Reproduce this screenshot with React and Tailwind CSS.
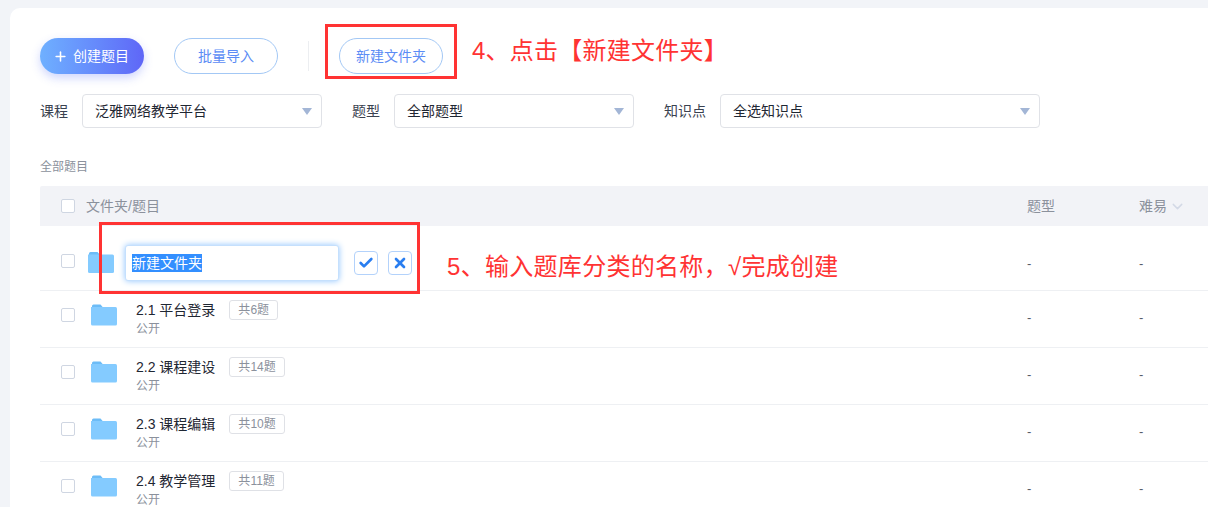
import { Plus, Check, X, ChevronDown } from "lucide-react";

function FolderIcon({ className }) {
  return (
    <svg viewBox="0 0 26 22" className={className}>
      <path d="M1 2.500A1.500 1.500 0 0 1 2.500 1h7l3 3.500H1z" fill="#6cbcf7" />
      <path d="M0 3.500h24.500A1.500 1.500 0 0 1 26 5v15.500a1.500 1.500 0 0 1-1.500 1.500h-23A1.500 1.500 0 0 1 0 20.500z" fill="#84cbff" />
    </svg>
  );
}

function Checkbox({ className = "" }) {
  return <span className={`block w-[14px] h-[14px] rounded-[2px] border border-[#cfd6e2] bg-white shrink-0 ${className}`} />;
}

function SelectBox({ text, width }) {
  return (
    <div className={`${width} h-[34px] rounded-[4px] border border-[#e0e2e7] bg-white flex items-center justify-between pl-[12px] pr-[9px] text-[14px] text-[#1f2733]`}>
      <span className="mt-[1px]">{text}</span>
      <span className="w-0 h-0 border-l-[5.500px] border-r-[5.500px] border-t-[7px] border-l-transparent border-r-transparent border-t-[#a3b6d6]" />
    </div>
  );
}

function OutlineButton({ text }) {
  return (
    <button className="w-[104px] h-[36px] rounded-full border border-[#a3c8f5] bg-white text-[14px] text-[#5b8cf5]">
      {text}
    </button>
  );
}

function Row({ title, count }) {
  return (
    <div className="h-[57px] border-b border-[#eef0f3] flex items-center pl-[21px] pb-[9px]">
      <Checkbox />
      <FolderIcon className="w-[26px] h-[23px] ml-[16px]" />
      <div className="ml-[19px] mt-[8px]">
        <div className="flex items-center h-[20px]">
          <span className="text-[14px] text-[#1f2733]">{title}</span>
          <span className="ml-[14px] h-[20px] px-[8px] rounded-[3px] border border-[#dfe1e6] text-[12px] leading-[18px] text-[#8b919c]">共{count}题</span>
        </div>
        <div className="text-[12px] leading-[16px] mt-[1px] text-[#8b919c]">公开</div>
      </div>
      <span className="ml-auto w-[112px] text-[13px] text-[#555c68] mt-[6px]">-</span>
      <span className="w-[69px] text-[13px] text-[#555c68] mt-[6px]">-</span>
    </div>
  );
}

export default function App() {
  return (
    <div className="relative h-[507px] w-[1208px] overflow-hidden bg-[#f2f4f8] pt-[8px] pl-[10px] font-['Liberation_Sans','Noto_Sans_CJK_SC',sans-serif]">
      <div className="h-[499px] bg-white rounded-tl-[10px] pl-[30px] pt-[30px]">
        <div className="flex items-center h-[36px]">
          <button className="w-[104px] h-[36px] rounded-full bg-gradient-to-r from-[#6fb0ff] to-[#5f66f7] shadow-[0_4px_10px_rgba(95,120,247,0.3)] text-white text-[14px] flex items-center pl-[13px] gap-[5px]">
            <Plus size={15} strokeWidth={2.500} />
            创建题目
          </button>
          <div className="ml-[30px]"><OutlineButton text="批量导入" /></div>
          <div className="w-px h-[30px] bg-[#eceef1] ml-[30px] mr-[30px]" />
          <OutlineButton text="新建文件夹" />
        </div>

        <div className="flex items-center mt-[20px] text-[14px] text-[#3a4250]">
          <span className="w-[42px]">课程</span>
          <SelectBox text="泛雅网络教学平台" width="w-[240px]" />
          <span className="w-[42px] ml-[30px]">题型</span>
          <SelectBox text="全部题型" width="w-[240px]" />
          <span className="w-[56px] ml-[30px]">知识点</span>
          <SelectBox text="全选知识点" width="w-[320px]" />
        </div>

        <div className="mt-[31px] h-[15px] text-[12px] leading-[16px] text-[#8b919c]">全部题目</div>

        <div className="mt-[12px]">
          <div className="h-[40px] bg-[#f2f3f7] rounded-tl-[2px] flex items-center pl-[21px] text-[14px] text-[#8b919c]">
            <Checkbox />
            <span className="ml-[11px]">文件夹/题目</span>
            <span className="ml-auto w-[112px]">题型</span>
            <span className="w-[69px] flex items-center gap-[2px]">
              难易
              <ChevronDown size={17} className="text-[#d3d9e6]" />
            </span>
          </div>

          <div className="h-[65px] border-b border-[#eef0f3] flex items-center pl-[21px] pt-[10px]">
            <Checkbox className="mt-[-5px]" />
            <FolderIcon className="w-[26px] h-[22px] ml-[13px] mt-[-3px]" />
            <div className="ml-[11px] w-[214px] h-[36px] rounded-[3px] bg-white border border-[#c5e0fd] shadow-[0_0_6px_#8fc4ff] flex items-center pl-[6px] text-[14px] text-white">
              <span className="bg-[#338fff] leading-[18px]">新建文件夹</span>
            </div>
            <span className="ml-[15px] w-[24px] h-[24px] rounded-[4px] border border-[#b3d2fb] flex items-center justify-center text-[#2a7ef0]">
              <Check size={16} strokeWidth={4} />
            </span>
            <span className="ml-[10px] w-[24px] h-[24px] rounded-[4px] border border-[#b3d2fb] flex items-center justify-center text-[#2a7ef0]">
              <X size={16} strokeWidth={4} />
            </span>
            <span className="ml-auto w-[112px] text-[13px] text-[#555c68] mt-[1px]">-</span>
            <span className="w-[69px] text-[13px] text-[#555c68] mt-[1px]">-</span>
          </div>

          <Row title="2.1 平台登录" count="6" />
          <Row title="2.2 课程建设" count="14" />
          <Row title="2.3 课程编辑" count="10" />
          <Row title="2.4 教学管理" count="11" />
        </div>
      </div>

      {/* screenshot annotations drawn over the page */}
      <div className="absolute left-[325px] top-[24px] w-[132px] h-[55px] border-[3px] border-[#ff3333]" />
      <div className="absolute left-[472px] top-[36px] text-[24px] leading-[30px] tracking-[0.25px] text-[#ff3333] whitespace-nowrap">4、点击【新建文件夹】</div>
      <div className="absolute left-[99px] top-[222px] w-[321px] h-[72px] border-[3px] border-[#ff3333]" />
      <div className="absolute left-[447px] top-[252px] text-[24px] leading-[30px] tracking-[0.3px] text-[#ff3333] whitespace-nowrap">5、输入题库分类的名称，√完成创建</div>
    </div>
  );
}
